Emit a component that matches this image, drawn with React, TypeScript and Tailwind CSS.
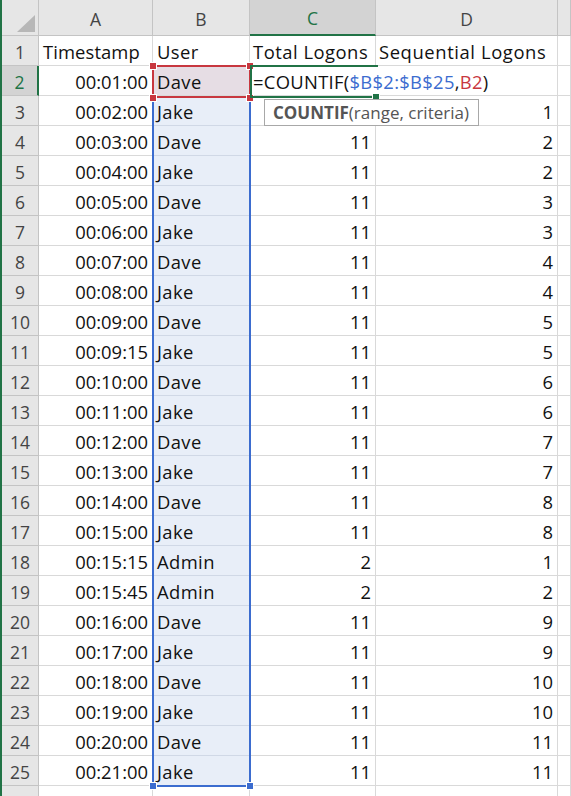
import React from "react";

const rows: [string, string, string, string][] = [
  ["00:01:00", "Dave", "", ""],
  ["00:02:00", "Jake", "", "1"],
  ["00:03:00", "Dave", "11", "2"],
  ["00:04:00", "Jake", "11", "2"],
  ["00:05:00", "Dave", "11", "3"],
  ["00:06:00", "Jake", "11", "3"],
  ["00:07:00", "Dave", "11", "4"],
  ["00:08:00", "Jake", "11", "4"],
  ["00:09:00", "Dave", "11", "5"],
  ["00:09:15", "Jake", "11", "5"],
  ["00:10:00", "Dave", "11", "6"],
  ["00:11:00", "Jake", "11", "6"],
  ["00:12:00", "Dave", "11", "7"],
  ["00:13:00", "Jake", "11", "7"],
  ["00:14:00", "Dave", "11", "8"],
  ["00:15:00", "Jake", "11", "8"],
  ["00:15:15", "Admin", "2", "1"],
  ["00:15:45", "Admin", "2", "2"],
  ["00:16:00", "Dave", "11", "9"],
  ["00:17:00", "Jake", "11", "9"],
  ["00:18:00", "Dave", "11", "10"],
  ["00:19:00", "Jake", "11", "10"],
  ["00:20:00", "Dave", "11", "11"],
  ["00:21:00", "Jake", "11", "11"],
];

const cell = "border-r border-b border-[#d9d9d9] pt-[2px] leading-[27px] text-[18.4px] text-[#111] whitespace-nowrap overflow-hidden";
const hdr = "border-r border-b border-[#c4c4c4] bg-[#e6e6e6] text-[17.5px] text-[#444] flex items-center justify-center pt-[3px]";

export default function App() {
  return (
    <div className="relative w-[571px] h-[796px] bg-white overflow-hidden font-['Open_Sans',sans-serif] flex">
      <div className="w-[2px] bg-[#217346] shrink-0" />
      <div className="grid grid-cols-[37px_114px_97px_126px_182px_1fr] grid-rows-[36px_repeat(26,30px)] flex-1">
        {/* header row */}
        <div className={hdr + " relative"}>
          <svg className="absolute left-[15px] top-[15px]" width="18" height="17" viewBox="0 0 18 17">
            <polygon points="18,0 18,17 0,17" fill="#b7b7b7" />
          </svg>
        </div>
        <div className={hdr}>A</div>
        <div className={hdr}>B</div>
        <div className="border-r border-[#c4c4c4] bg-[#d3d3d3] text-[17.5px] text-[#217346] flex items-center justify-center pt-[3px] border-b-2 border-b-[#217346]">C</div>
        <div className={hdr}>D</div>
        <div className={hdr}></div>

        {/* row 1 */}
        <div className={hdr}>1</div>
        <div className={cell + " pl-[4px] tracking-[0.1px]"}>Timestamp</div>
        <div className={cell + " pl-[4px] tracking-[0.4px]"}>User</div>
        <div className={cell + " pl-[3px] tracking-[0.5px]"}>Total Logons</div>
        <div className={cell + " pl-[3px] tracking-[0.6px]"}>Sequential Logons</div>
        <div className={cell}></div>

        {rows.map((r, i) => {
          const n = i + 2;
          if (n === 2) {
            return (
              <React.Fragment key={n}>
                <div className="border-b border-[#c4c4c4] bg-[#d3d3d3] text-[17.5px] text-[#217346] flex items-center justify-center pt-[3px] border-r-2 border-r-[#217346]">2</div>
                <div className={cell + " text-right pr-[4px]"}>{r[0]}</div>
                <div className="border-r border-b border-[#d9d9d9] bg-[#e6dde4] pt-[2px] leading-[27px] text-[18.4px] text-[#111] pl-[4px] tracking-[0.4px]">{r[1]}</div>
                <div className="col-span-2 border-r border-b border-[#d9d9d9] pt-[2px] leading-[27px] text-[18.4px] text-[#111] whitespace-nowrap pl-[3px] tracking-[0.3px]">
                  =COUNTIF(<span className="text-[#3b6ccf]">$B$2:$B$25</span>,<span className="text-[#c8373f]">B2</span>)
                </div>
                <div className={cell}></div>
              </React.Fragment>
            );
          }
          return (
            <React.Fragment key={n}>
              <div className={hdr}>{n}</div>
              <div className={cell + " text-right pr-[4px]"}>{r[0]}</div>
              <div className="border-r border-b border-[#d0d8e6] bg-[#e8eef8] pt-[2px] leading-[27px] text-[18.4px] text-[#111] pl-[4px] tracking-[0.4px] whitespace-nowrap">{r[1]}</div>
              <div className={cell + " text-right pr-[4px]"}>{r[2]}</div>
              <div className={cell + " text-right pr-[4px]"}>{r[3]}</div>
              <div className={cell}></div>
            </React.Fragment>
          );
        })}

        {/* row 26 partial */}
        <div className={hdr}></div>
        <div className={cell}></div>
        <div className={cell}></div>
        <div className={cell}></div>
        <div className={cell}></div>
        <div className={cell}></div>
      </div>

      {/* blue range B2:B25 */}
      <div className="absolute left-[152px] top-[96px] w-[99px] h-[691px] border-2 border-[#3b6ccf]" />
      <div className="absolute left-[149px] top-[782px] w-[8px] h-[8px] bg-[#3b6ccf] border border-white" />
      <div className="absolute left-[246px] top-[782px] w-[8px] h-[8px] bg-[#3b6ccf] border border-white" />

      {/* red range B2 */}
      <div className="absolute left-[152px] top-[65px] w-[99px] h-[33px] border-2 border-[#c8373f]" />
      <div className="absolute left-[149px] top-[62px] w-[8px] h-[8px] bg-[#c8373f] border border-white" />
      <div className="absolute left-[246px] top-[62px] w-[8px] h-[8px] bg-[#c8373f] border border-white" />
      <div className="absolute left-[149px] top-[94px] w-[8px] h-[8px] bg-[#c8373f] border border-white" />
      <div className="absolute left-[246px] top-[94px] w-[8px] h-[8px] bg-[#c8373f] border border-white" />

      {/* active cell C2 */}
      <div className="absolute left-[250px] top-[65px] w-[128px] h-[33px] border-t-2 border-b-2 border-l-2 border-[#217346]" />
      <div className="absolute left-[372px] top-[93px] w-[8px] h-[8px] bg-[#217346] border border-white" />

      {/* tooltip */}
      <div className="absolute left-[264px] top-[99px] w-[215px] h-[27px] bg-white border border-[#a8a8a8] text-[17px] leading-[25px] text-[#555] pl-[8px] whitespace-nowrap">
        <span className="font-bold">COUNTIF</span>(range, criteria)
      </div>
    </div>
  );
}
